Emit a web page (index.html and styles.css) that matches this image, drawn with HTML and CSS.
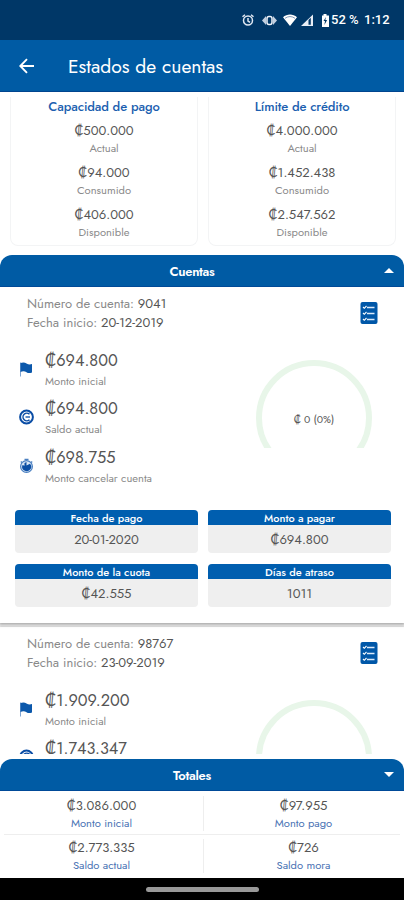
FILE: index.html
```html
<!DOCTYPE html>
<html lang="es">
<head>
  <meta charset="UTF-8" />
  <meta name="viewport" content="width=device-width, initial-scale=1.0"/>
  <title>Estados de cuentas</title>
  <link rel="stylesheet" href="styles.css">
</head>
<body>
  <svg class="defs" width="0" height="0">
    <symbol id="i-list" viewBox="0 0 18 24">
      <rect x="0.5" y="1" width="17" height="22" rx="2" fill="#0057a8"/>
      <path d="M3 6l1.300 1.300L6.500 5M3 12l1.300 1.300L6.500 11M3 18l1.300 1.300L6.500 17" fill="none" stroke="#fff" stroke-width="1.100"/>
      <path d="M7 6.500h7.500M7 12.500h7.500M7 18.500h7.500" stroke="#dcebfa" stroke-width="1.500"/>
    </symbol>
    <symbol id="i-flag" viewBox="0 0 16 16">
      <path d="M2.500 1.500v14" stroke="#7fa5d4" stroke-width="1"/>
      <path d="M2.500 2c2.500-1 4.500-.6 6 .4s3.500 1.300 5.500.6v8.500c-2.500 1-4 .6-5.500-.3s-3.500-1.300-6-.3z" fill="#0b58ab"/>
    </symbol>
    <symbol id="i-coin" viewBox="0 0 16 16">
      <circle cx="8.500" cy="8" r="6.400" fill="#fff" stroke="#0a4da5" stroke-width="2"/>
      <path d="M11.500 5.300A3.800 3.800 0 1 0 11.500 10.700" fill="none" stroke="#0a4da5" stroke-width="1.500"/>
      <path d="M7.500 8h4.500" fill="none" stroke="#0a4da5" stroke-width="1.300"/>
    </symbol>
    <symbol id="i-timer" viewBox="0 0 16 16">
      <path d="M6.500 1.300h4M2.800 3.500l1.200 1.200M14.200 3.500L13 4.700" stroke="#4a7fc0" stroke-width="1.300"/>
      <circle cx="8.500" cy="8.500" r="5.900" fill="#d9e6f5" stroke="#4a7fc0" stroke-width="1.200"/>
      <path d="M8.500 4v3.500L12 5.700A4.500 4.500 0 1 1 4.500 7l2 .8V5z" fill="#0b4ea4"/>
    </symbol>
  </svg>

  <div class="status-bar">
    <svg class="status-icons" viewBox="0 0 90 16" width="90" height="16">
      <g fill="none" stroke="#dfe7f2" stroke-width="1.500">
        <circle cx="8" cy="8.500" r="4.500"/>
        <path d="M2.500 4.800L5 2.700M13.500 4.800L11 2.700M8 6v3l2 1.300"/>
      </g>
      <path d="M22 8.500l4-4.500v9zM37 8.500L33 4v9z" fill="#c2cfe0"/>
      <rect x="27" y="4.500" width="5" height="8" rx="2" fill="none" stroke="#f0f4fa" stroke-width="1.500"/>
      <path d="M43 5.300C47 1.600 53 1.600 57 5.300L50 14z" fill="#fff"/>
      <path d="M45 6.300q5-3.500 10 0" fill="none" stroke="#5f7fa5" stroke-width=".8"/>
      <path d="M61 14L73 2.500V14z" fill="#e8eef6"/>
      <path d="M68.500 8v4.700h2.300V5.800z" fill="#003767"/>
      <path d="M82 3.500h1.500V2h3v1.500H89V15h-7z" fill="#fff"/>
      <path d="M86 5l-2.500 4H85l-.6 4 2.700-5h-1.800z" fill="#003767"/>
    </svg>
    <span class="battery">52 %</span>
    <span class="clock">1:12</span>
  </div>

  <header>
    <svg viewBox="0 0 16 16" width="16" height="16">
      <path d="M15 8H1.500M8 1.200L1.300 8L8 14.800" fill="none" stroke="#fff" stroke-width="1.900"/>
    </svg>
    <h1>Estados de cuentas</h1>
  </header>

  <section class="summary">
    <div class="card">
      <h2>Capacidad de pago</h2>
      <p class="amount">₡500.000</p><p class="label">Actual</p>
      <p class="amount">₡94.000</p><p class="label">Consumido</p>
      <p class="amount">₡406.000</p><p class="label">Disponible</p>
    </div>
    <div class="card">
      <h2>Límite de crédito</h2>
      <p class="amount">₡4.000.000</p><p class="label">Actual</p>
      <p class="amount">₡1.452.438</p><p class="label">Consumido</p>
      <p class="amount">₡2.547.562</p><p class="label">Disponible</p>
    </div>
  </section>

  <div class="panel-title">
    <span>Cuentas</span>
    <i class="caret up"></i>
  </div>

  <main>
    <article class="account">
      <div class="account-head">
        <div>
          <p>Número de cuenta: <b>9041</b></p>
          <p>Fecha inicio: <b>20-12-2019</b></p>
        </div>
        <svg width="18" height="24"><use href="#i-list"/></svg>
      </div>
      <div class="account-body">
        <ul>
          <li>
            <svg width="16" height="16"><use href="#i-flag"/></svg>
            <div><strong>₡694.800</strong><small>Monto inicial</small></div>
          </li>
          <li>
            <svg width="16" height="16"><use href="#i-coin"/></svg>
            <div><strong>₡694.800</strong><small>Saldo actual</small></div>
          </li>
          <li>
            <svg width="16" height="16"><use href="#i-timer"/></svg>
            <div><strong>₡698.755</strong><small>Monto cancelar cuenta</small></div>
          </li>
        </ul>
        <div class="gauge"><div class="ring"></div><span>₡ 0 (0%)</span></div>
      </div>
      <div class="tiles">
        <div class="tile"><h3>Fecha de pago</h3><p>20-01-2020</p></div>
        <div class="tile"><h3>Monto a pagar</h3><p>₡694.800</p></div>
        <div class="tile"><h3>Monto de la cuota</h3><p>₡42.555</p></div>
        <div class="tile"><h3>Días de atraso</h3><p>1011</p></div>
      </div>
    </article>

    <article class="account">
      <div class="account-head">
        <div>
          <p>Número de cuenta: <b>98767</b></p>
          <p>Fecha inicio: <b>23-09-2019</b></p>
        </div>
        <svg width="18" height="24"><use href="#i-list"/></svg>
      </div>
      <div class="account-body">
        <ul>
          <li>
            <svg width="16" height="16"><use href="#i-flag"/></svg>
            <div><strong>₡1.909.200</strong><small>Monto inicial</small></div>
          </li>
          <li>
            <svg width="16" height="16"><use href="#i-coin"/></svg>
            <div><strong>₡1.743.347</strong></div>
          </li>
        </ul>
        <div class="gauge"><div class="ring"></div></div>
      </div>
    </article>
  </main>

  <div class="panel-title">
    <span>Totales</span>
    <i class="caret down"></i>
  </div>

  <section class="totals">
    <div><p class="amount">₡3.086.000</p><p class="label">Monto inicial</p></div>
    <div><p class="amount">₡97.955</p><p class="label">Monto pago</p></div>
    <div><p class="amount">₡2.773.335</p><p class="label">Saldo actual</p></div>
    <div><p class="amount">₡726</p><p class="label">Saldo mora</p></div>
  </section>

  <footer><i></i></footer>
</body>
</html>
```
FILE: styles.css
```css
* {
  box-sizing: border-box;
  margin: 0;
  padding: 0;
}

body {
  width: 404px;
  height: 900px;
  overflow: hidden;
  display: flex;
  flex-direction: column;
  font-family: Jost, Lato, sans-serif;
  background: #fff;
  color: #555;
}

svg {
  display: block;
  flex: none;
}

.defs {
  position: absolute;
}

.status-bar {
  flex: none;
  height: 40px;
  background: #003767;
  color: #fff;
  display: flex;
  align-items: center;
  padding-left: 240px;
  font: 500 13px/40px Roboto, sans-serif;
}

.status-icons {
  margin-right: 1px;
}

.battery {
  width: 28px;
  white-space: nowrap;
}

.clock {
  margin-left: 5px;
  font-size: 13px;
}

header {
  flex: none;
  height: 52px;
  background: #005ba4;
  border-bottom: 1px solid #00458f;
  color: #fff;
  display: flex;
  align-items: center;
  gap: 33px;
  padding-left: 19px;
}

header h1 {
  font-size: 19.300px;
  font-weight: 400;
}

.summary {
  flex: none;
  height: 163px;
  display: grid;
  grid-template-columns: 188px 188px;
  gap: 10px;
  padding: 5px 0 9px 10px;
}

.card {
  height: 149px;
  border: 1px solid #f3f4f5;
  border-top: none;
  border-radius: 0 0 8px 8px;
  text-align: center;
}

.card h2 {
  height: 22px;
  font-size: 13px;
  line-height: 20px;
  font-weight: 500;
  letter-spacing: -.1px;
  color: #1c5fb0;
}

.amount {
  font-size: 13px;
  line-height: 24px;
  height: 24px;
}

.label {
  font-size: 11.200px;
  line-height: 11px;
  height: 18.200px;
  color: #8a8a8a;
}

.panel-title {
  flex: none;
  position: relative;
  height: 32px;
  border-radius: 12px 12px 0 0;
  background: #005ba4;
  border-bottom: 1px solid #004a98;
  color: #fff;
  text-align: center;
  font-size: 13px;
  line-height: 33px;
  font-weight: 600;
  letter-spacing: -.3px;
  padding-right: 20px;
}

.caret {
  position: absolute;
  right: 10px;
  top: 13px;
  border: 5px solid transparent;
}

.caret.up {
  border-top: none;
  border-bottom-color: #fff;
}

.caret.down {
  border-bottom: none;
  border-top-color: #fff;
}

main {
  flex: none;
  height: 467px;
  overflow: hidden;
  margin-bottom: 5px;
}

.account {
  height: 336px;
  padding-top: 8px;
  margin-bottom: 4px;
  box-shadow: 0 1px 3px 1px #aaa;
}

.account-head {
  display: flex;
  justify-content: space-between;
  padding: 0 26px 0 27px;
  height: 54px;
  color: #8a8a8a;
  font-size: 13px;
  line-height: 18.500px;
}

.account-head b {
  font-weight: 400;
  color: #555;
}

.account-head svg {
  margin-top: 6px;
}

.account-body {
  display: flex;
  height: 161px;
}

.account-body ul {
  width: 256px;
  list-style: none;
}

.account-body li {
  display: flex;
  gap: 11px;
  height: 48.300px;
  padding-left: 18px;
}

.account-body li svg {
  margin-top: 12px;
}

.account-body strong,
.account-body small {
  display: block;
}

.account-body strong {
  font-size: 16.300px;
  font-weight: 400;
  line-height: 24px;
}

.account-body small {
  font-size: 11.200px;
  line-height: 16px;
  color: #8a8a8a;
}

.gauge {
  position: relative;
  width: 116px;
  height: 88px;
  margin-top: 11px;
  overflow: hidden;
}

.ring {
  width: 116px;
  height: 116px;
  border: 6px solid #e8f6e9;
  border-radius: 50%;
}

.gauge span {
  position: absolute;
  left: 0;
  right: 0;
  top: 52px;
  text-align: center;
  font-size: 10.500px;
  line-height: 16px;
}

.tiles {
  display: grid;
  grid-template-columns: 183px 183px;
  gap: 11px 10px;
  padding-left: 15px;
}

.tile {
  height: 43px;
  border-radius: 4px;
  overflow: hidden;
  background: #efefef;
  text-align: center;
}

.tile h3 {
  height: 15px;
  background: #005eaf;
  color: #fff;
  font-size: 11px;
  font-weight: 500;
  line-height: 16px;
}

.tile p {
  font-size: 13px;
  line-height: 30px;
}

.totals {
  flex: none;
  height: 87px;
  display: grid;
  grid-template-columns: 203px 201px;
  grid-template-rows: 42px 42px;
  background:
    linear-gradient(#eee, #eee) 203px 5px / 1px 35px no-repeat,
    linear-gradient(#eee, #eee) 203px 48px / 1px 34px no-repeat,
    linear-gradient(#eee, #eee) 4px 43px / 396px 1px no-repeat;
  text-align: center;
  padding-top: 3px;
}

.totals .label {
  color: #4a73b4;
}

footer {
  flex: none;
  height: 22px;
  background: #000;
  display: flex;
  justify-content: center;
  padding-top: 9px;
}

footer i {
  width: 113px;
  height: 5px;
  border-radius: 3px;
  background: #999;
}
```
